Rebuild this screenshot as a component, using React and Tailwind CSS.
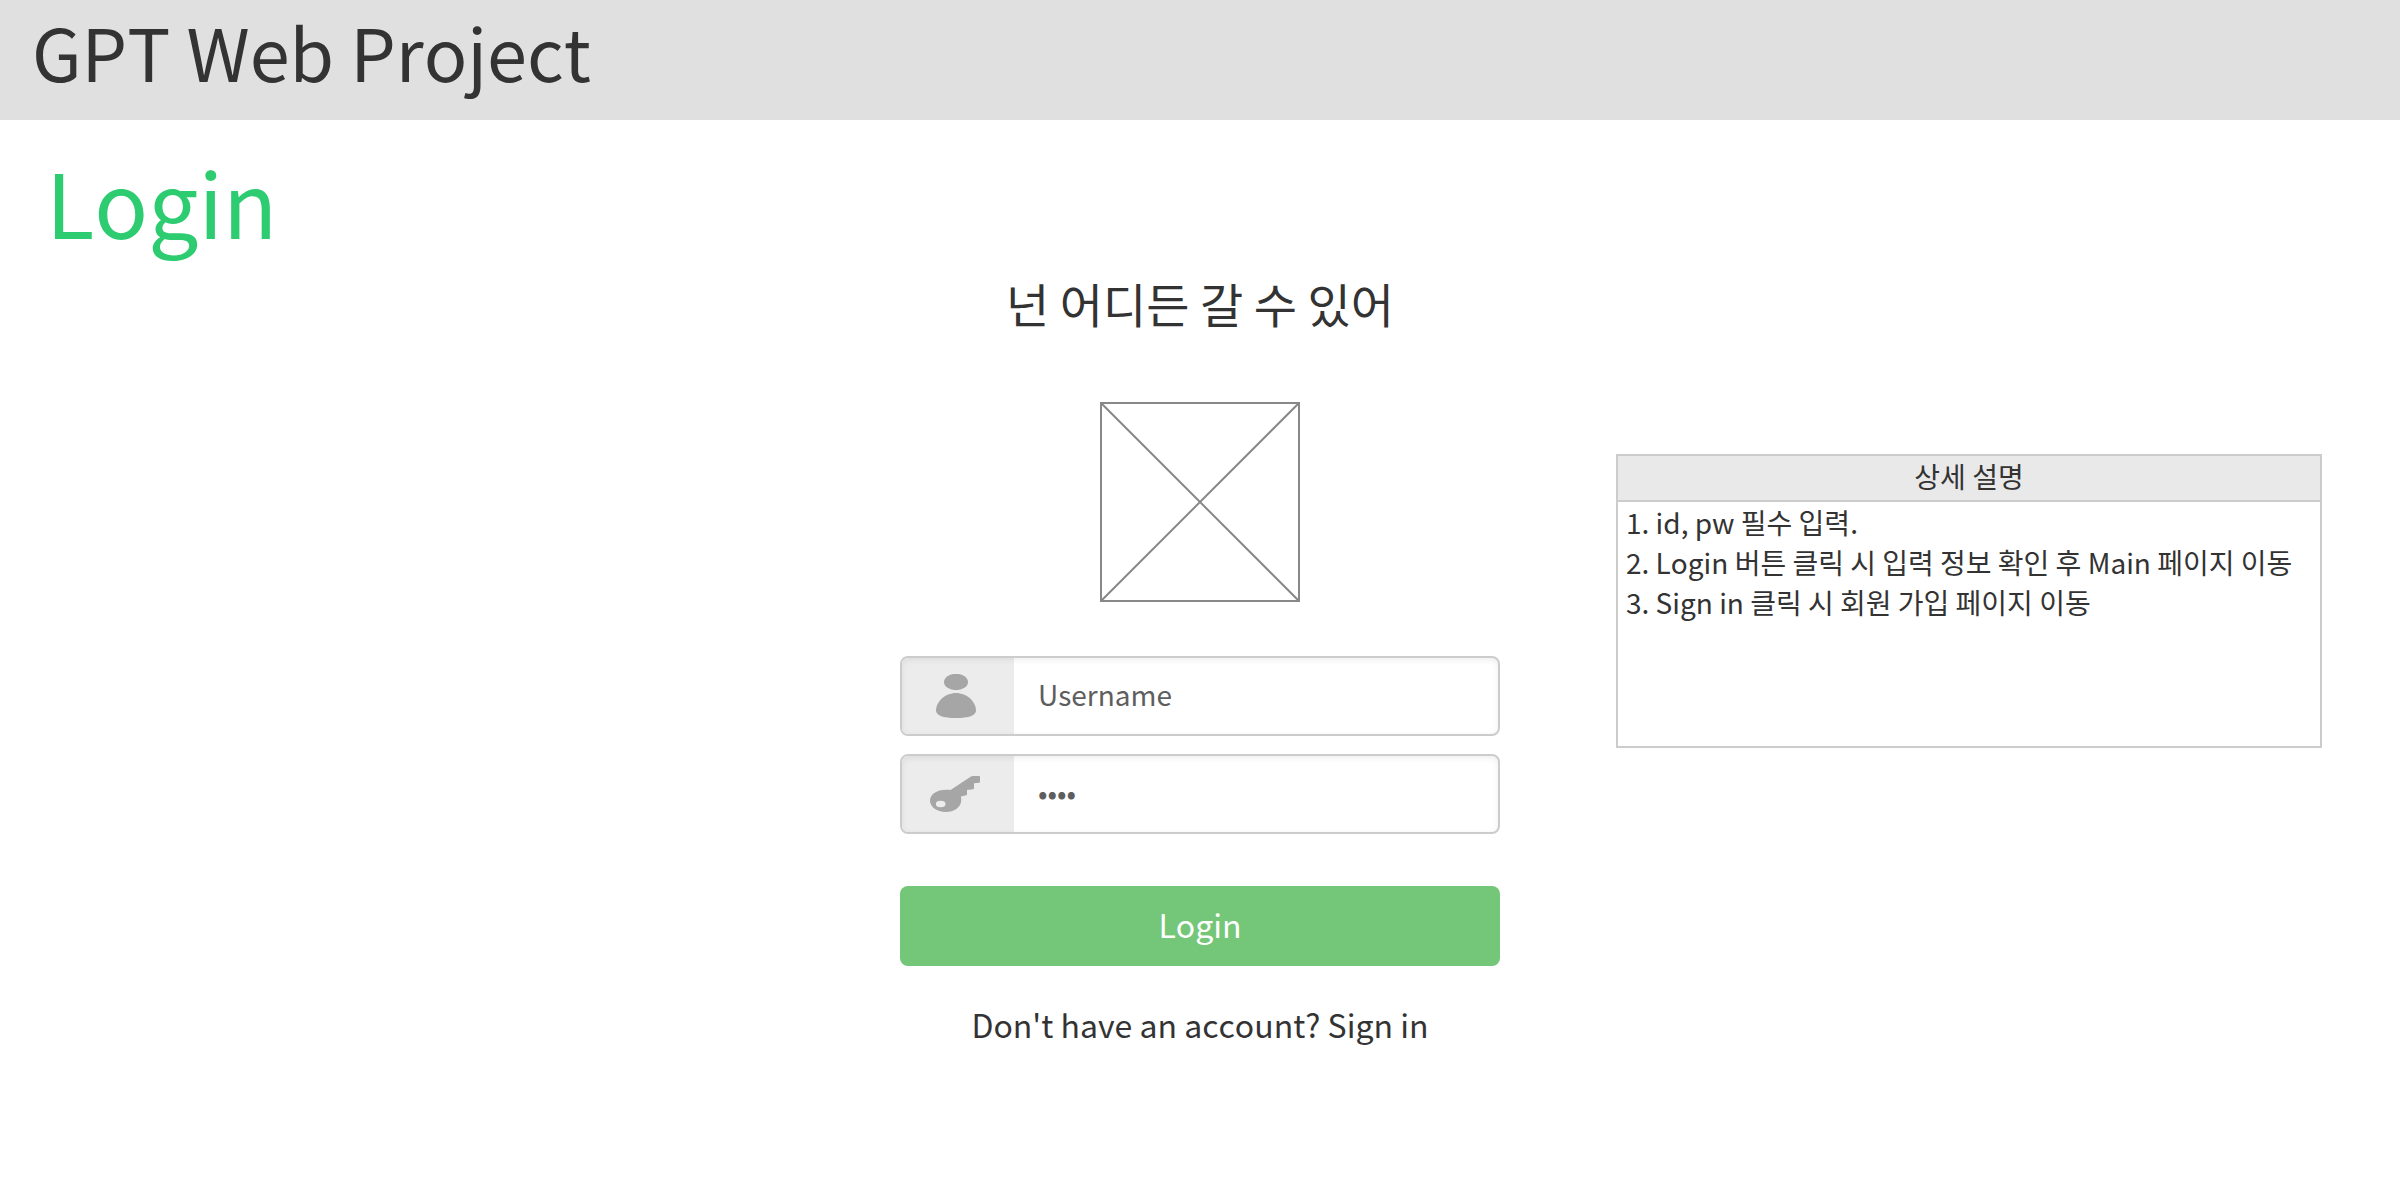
import React, { useState } from "react";

function UserIcon() {
  return (
    <svg aria-hidden="true" width="52" height="44" viewBox="0 0 52 44" fill="#a6a6a6">
      <ellipse cx="26" cy="8" rx="12" ry="8.2" />
      <path d="M26 19c11 0 20 9 20 17.500c0 5-7 7.500-20 7.500s-20-2.500-20-7.500C6 28 15 19 26 19z" />
    </svg>
  );
}

function KeyIcon() {
  return (
    <svg aria-hidden="true" width="52" height="36" viewBox="0 0 52 36" fill="#a6a6a6">
      <path
        fillRule="evenodd"
        d="M20.500 14L41 .4Q41.700 0 42.500 0H49.200Q50 0 50 .8V5.800Q50 6.600 49.200 6.700L44 7.300V12.300Q44 13.300 43 13.300L37 14V18.200Q37 19 36.200 19.200L30.800 20.400C31.200 21.800 31.400 23.200 31.200 25C30.700 31.500 24 36 15.600 36C7 36 0 31 0 24.800C0 18 7.500 12.600 20.500 14zM10.700 24.800a4.800 3.200 0 1 0 0 6.400a4.800 3.200 0 1 0 0-6.400z"
      />
    </svg>
  );
}

function Field({ id, label, icon, ...inputProps }) {
  return (
    <div className="relative flex h-20 overflow-hidden rounded-lg border-2 border-[#cccccc] bg-white">
      <label htmlFor={id} aria-label={label} className="flex w-[112px] shrink-0 items-center bg-[#ececec] pl-7">
        {icon}
      </label>
      <input
        id={id}
        aria-label={label}
        className="min-w-0 flex-1 bg-transparent px-6 pb-1 text-[28px] leading-10 text-[#5e5e5e] outline-none placeholder:text-[#5e5e5e]"
        {...inputProps}
      />
      <span className="pointer-events-none absolute inset-0 rounded-md shadow-[inset_0_2px_6px_rgba(0,0,0,0.07)]" />
    </div>
  );
}

function ImagePlaceholder() {
  return (
    <svg
      role="img"
      aria-label="Image placeholder"
      className="mx-auto block"
      width="200"
      height="200"
      viewBox="0 0 200 200"
      fill="none"
      stroke="#888888"
      strokeWidth="2"
    >
      <rect x="1" y="1" width="198" height="198" />
      <path d="M1 1L199 199M199 1L1 199" />
    </svg>
  );
}

const notes = [
  "id, pw 필수 입력.",
  "Login 버튼 클릭 시 입력 정보 확인 후 Main 페이지 이동",
  "Sign in 클릭 시 회원 가입 페이지 이동",
];

export default function App() {
  const [username, setUsername] = useState("");
  const [password, setPassword] = useState("pass");

  return (
    <div className="min-h-screen bg-white font-['Noto_Sans_CJK_KR',sans-serif] text-[#333333] [font-kerning:none]">
      <header className="h-[120px] bg-[#e0e0e0] px-8">
        <p className="text-[72px] leading-[102px]">GPT Web Project</p>
      </header>

      <main className="pt-6">
        <h1 className="px-[46px] text-[89px] leading-[114px] text-[#2ecc71]">Login</h1>

        <div className="grid grid-cols-[minmax(0,1fr)_600px_minmax(0,1fr)] pt-2.5">
          <section className="col-start-2">
            <h2 className="text-center text-[47px] leading-[70px]">넌 어디든 갈 수 있어</h2>
            <div className="pt-16">
              <ImagePlaceholder />
            </div>
            <form className="pt-[54px]" onSubmit={(e) => e.preventDefault()}>
              <div className="flex flex-col gap-[18px]">
                <Field
                  id="username"
                  label="Username"
                  icon={<UserIcon />}
                  type="text"
                  placeholder="Username"
                  value={username}
                  onChange={(e) => setUsername(e.target.value)}
                />
                <Field
                  id="password"
                  label="Password"
                  icon={<KeyIcon />}
                  type="password"
                  value={password}
                  onChange={(e) => setPassword(e.target.value)}
                />
              </div>
              <button
                type="submit"
                className="mt-[52px] h-20 w-full rounded-lg bg-[#74c678] pb-1 text-[32px] leading-[48px] text-white"
              >
                Login
              </button>
            </form>
            <p className="pt-[34px] text-center text-[32px] leading-[48px]">
              Don't have an account? <a href="#sign-in">Sign in</a>
            </p>
          </section>

          <aside className="mt-[186px] mr-[78px] ml-[116px] min-h-[294px] self-start border-2 border-[#cccccc] text-[28px] leading-10">
            <h3 className="border-b-2 border-[#cccccc] bg-[#e9e9e9] pb-1 text-center">상세 설명</h3>
            <ol className="list-inside list-decimal px-2">
              {notes.map((note) => (
                <li key={note}>{note}</li>
              ))}
            </ol>
          </aside>
        </div>
      </main>
    </div>
  );
}
